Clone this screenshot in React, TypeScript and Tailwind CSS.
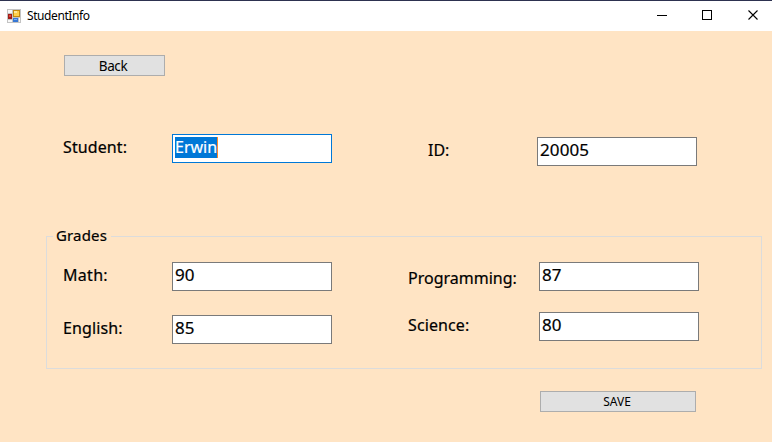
import React from "react";

type FieldProps = {
  label: string;
  value: string;
  labelClass: string;
  selected?: boolean;
};

function Field({ label, value, labelClass, selected = false }: FieldProps) {
  return (
    <div className="flex items-start">
      <label className={`shrink-0 whitespace-nowrap leading-6 ${labelClass}`}>{label}</label>
      <div
        className={`flex h-[29px] w-40 shrink-0 items-start border bg-white pl-0.5 leading-6 ${
          selected ? "border-[#0078d7]" : "border-[#7a7a7a]"
        }`}
      >
        {selected ? (
          <span className="mt-0.5 h-[21px] w-[43px] border-r border-[#ff8728] bg-[#0078d7] leading-5 text-white">
            {value}
          </span>
        ) : (
          <span className="text-[17px] tracking-[0.1px]">{value}</span>
        )}
      </div>
    </div>
  );
}

function FormIcon() {
  return (
    <svg width="14" height="14" viewBox="0 0 14 14" shapeRendering="crispEdges">
      <path fill="#c3c3c3" d="M0 0h14v14H0z" />
      <path fill="#f7f7f7" d="M1 1h4v3H1zM1 11h4v2H1zM12 9h1v4h-1z" />
      <path fill="#9e1c16" d="M1 5h4v5H1z" />
      <path fill="#e0443a" d="M2 6h2v2H2z" />
      <path fill="#c38a10" d="M6 1h7v7H6z" />
      <path fill="#ffd04a" d="M7 2h5v5H7z" />
      <path fill="#ffe89a" d="M7 2h3v2H7z" />
      <path fill="#3677d5" d="M6 9h5v4H6z" />
      <path fill="#78adf5" d="M7 10h3v1H7z" />
    </svg>
  );
}

export default function App() {
  return (
    <div className="flex h-[442px] w-[772px] flex-col overflow-hidden bg-[#ffe4c4] font-['Noto_Sans','Open_Sans',sans-serif] text-[16px] text-black">
      <header className="flex h-[31px] shrink-0 items-center border-t border-[#2d3250] bg-white pl-[7px]">
        <FormIcon />
        <h1 className="ml-1.5 text-[12px] tracking-[-0.42px]">StudentInfo</h1>
        <svg className="ml-auto" width="116" height="30" viewBox="0 0 116 30" fill="none" stroke="#000">
          <path d="M1 14.5h10M46.5 9.5h9v9h-9z" shapeRendering="crispEdges" />
          <path d="M92.5 9.5l9 9M101.5 9.5l-9 9" strokeWidth="1.1" />
        </svg>
      </header>

      <main className="flex flex-col [-webkit-text-stroke:0.2px_currentColor]">
        <button className="mt-6 ml-16 h-[21px] w-[101px] border border-[#adadad] bg-[#e1e1e1] pr-[3px] text-[13.5px] leading-[20px] tracking-[-0.4px] [-webkit-text-stroke:0]">
          Back
        </button>

        <section className="mt-[58px] flex h-[102px] items-start pl-[63px]">
          <Field label="Student:" value="Erwin" labelClass="mt-px w-[109px] tracking-[0.1px]" selected />
          <div className="ml-24 pt-[3px]">
            <Field label="ID:" value="20005" labelClass="mt-px w-[109px]" />
          </div>
        </section>

        <section className="ml-[46px] flex h-[133px] w-[716px] flex-col border border-t-0 border-[#dcdcdc]">
          <div className="-mt-3 flex h-6 items-center">
            <span className="h-px w-1.5 bg-[#dcdcdc]" />
            <h2 className="-mt-0.5 w-[58px] pl-[3px] text-[15px] leading-6 tracking-[0.15px]">Grades</h2>
            <span className="h-px flex-1 bg-[#dcdcdc]" />
          </div>
          <div className="mt-3.5 flex items-start pl-4">
            <div className="flex flex-col gap-6">
              <Field label="Math:" value="90" labelClass="mt-px w-[109px] tracking-[0.3px]" />
              <Field label="English:" value="85" labelClass="mt-px w-[109px] tracking-[0.1px]" />
            </div>
            <div className="ml-[76px] flex flex-col gap-[21px]">
              <Field label="Programming:" value="87" labelClass="mt-1 w-[131px]" />
              <Field label="Science:" value="80" labelClass="mt-px w-[131px] tracking-[0.1px]" />
            </div>
          </div>
        </section>

        <button className="mt-[22px] ml-[540px] h-[21px] w-[156px] border border-[#adadad] bg-[#e1e1e1] pr-0.5 text-[12px] leading-[19px] [-webkit-text-stroke:0]">
          SAVE
        </button>
      </main>
    </div>
  );
}
